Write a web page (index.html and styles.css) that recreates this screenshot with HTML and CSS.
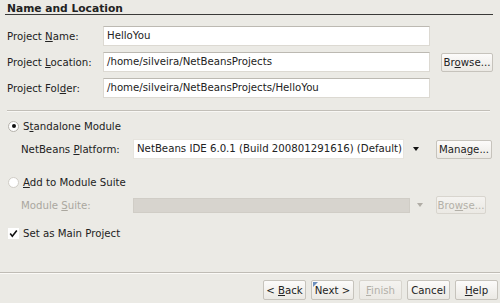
FILE: index.html
```html
<!DOCTYPE html>
<html>
<head>
<meta charset="utf-8">
<link rel="stylesheet" href="styles.css">
</head>
<body>
<div class="dlg">
  <div class="title">Name and Location</div>
  <div class="form">
    <div class="row">
      <span class="lbl">Project <u>N</u>ame:</span>
      <div class="field">HelloYou</div>
    </div>
    <div class="row">
      <span class="lbl">Project <u>L</u>ocation:</span>
      <div class="field">/home/silveira/NetBeansProjects</div>
      <button class="btn browse">Br<u>o</u>wse...</button>
    </div>
    <div class="row">
      <span class="lbl">Project Fol<u>d</u>er:</span>
      <div class="field">/home/silveira/NetBeansProjects/HelloYou</div>
    </div>
  </div>
  <div class="sep"></div>
  <div class="opt first">
    <span class="radio on"></span>
    <span>S<u>t</u>andalone Module</span>
  </div>
  <div class="sub platform">
    <span class="sublbl">NetBeans <u>P</u>latform:</span>
    <div class="combo">NetBeans IDE 6.0.1 (Build 200801291616) (Default)</div>
    <span class="arrow"></span>
    <button class="btn manage">Mana<u>g</u>e...</button>
  </div>
  <div class="opt second">
    <span class="radio"></span>
    <span><u>A</u>dd to Module Suite</span>
  </div>
  <div class="sub suite">
    <span class="sublbl dis">Module <u>S</u>uite:</span>
    <div class="combo disabled"></div>
    <span class="arrow disarrow"></span>
    <button class="btn dbtn browse2">Bro<u>w</u>se...</button>
  </div>
  <div class="opt third">
    <span class="check"><svg width="11" height="11" viewBox="0 0 11 11"><path d="M2.2 5.6 L4.3 8.2 L8.8 2.4" fill="none" stroke="#111" stroke-width="1.6"/></svg></span>
    <span>Set as Main Project</span>
  </div>
  <div class="bottomsep"></div>
  <div class="buttons">
    <button class="btn nav">&lt; <u>B</u>ack</button>
    <button class="btn nav next">Next &gt;</button>
    <button class="btn nav dbtn"><u>F</u>inish</button>
    <button class="btn nav">Cancel</button>
    <button class="btn nav"><u>H</u>elp</button>
  </div>
</div>
</body>
</html>
```
FILE: styles.css
```css
body {
  margin: 0;
}
.dlg {
  width: 500px;
  height: 303px;
  background: #ebeae5;
  font-family: "DejaVu Sans", sans-serif;
  font-size: 10.2px;
  color: #222;
  display: flex;
  flex-direction: column;
  box-sizing: border-box;
}
u {
  text-decoration: underline;
  text-underline-offset: 1px;
}
.title {
  margin: 0 7px 0 5px;
  padding: 3px 0 0 2px;
  height: 15px;
  box-sizing: border-box;
  border-bottom: 1px solid #3a3a38;
  font-weight: bold;
  font-size: 10.7px;
  line-height: 11px;
}
.form {
  padding: 11px 0 0 7px;
  display: flex;
  flex-direction: column;
  gap: 6px;
}
.row {
  display: flex;
  align-items: center;
  height: 20px;
}
.lbl {
  width: 96px;
}
.field {
  width: 327px;
  height: 20px;
  box-sizing: border-box;
  background: #fff;
  border: 1px solid #dcd9d2;
  border-top-color: #bcb9b2;
  padding-left: 3px;
  line-height: 18px;
  white-space: nowrap;
}
.btn {
  font-family: "DejaVu Sans", sans-serif;
  font-size: 10.2px;
  color: #222;
  height: 20px;
  box-sizing: border-box;
  border: 1px solid #c6c3bc;
  border-radius: 2px;
  background: linear-gradient(#fcfbfa, #ebe9e4);
  padding: 0;
  white-space: nowrap;
  position: relative;
}
.browse {
  margin-left: 11px;
  width: 52px;
  height: 19px;
}
.sep {
  margin: 12px 10px 0 7px;
  height: 1px;
  background: #c2bfb8;
  border-bottom: 1px solid #f8f7f4;
}
.opt {
  display: flex;
  align-items: center;
  height: 14px;
  padding-left: 8px;
  gap: 4px;
}
.first {
  margin-top: 7px;
}
.second {
  margin-top: 16px;
}
.third {
  margin-top: 12px;
}
.radio {
  width: 11px;
  height: 11px;
  box-sizing: border-box;
  border-radius: 50%;
  border: 1px solid #d0cdc6;
  background: #fff;
  display: flex;
  align-items: center;
  justify-content: center;
}
.radio.on {
  border-color: #b5b2ab;
}
.radio.on::after {
  content: "";
  width: 4px;
  height: 4px;
  border-radius: 50%;
  background: #111;
}
.check {
  width: 11px;
  height: 11px;
  box-sizing: border-box;
  background: #fff;
  display: flex;
}
.sub {
  display: flex;
  align-items: center;
  padding-left: 21px;
}
.platform {
  margin-top: 6px;
  height: 20px;
}
.suite {
  margin-top: 7px;
  height: 18px;
}
.sublbl {
  width: 112px;
}
.dis {
  color: #aaa79f;
}
.combo {
  width: 271px;
  height: 20px;
  box-sizing: border-box;
  background: #fff;
  border: 1px solid #e6e4de;
  padding-left: 3px;
  line-height: 18px;
  white-space: nowrap;
}
.combo.disabled {
  width: 277px;
  height: 15px;
  background: #d7d4ce;
  border-color: #d0cdc6;
}
.arrow {
  margin-left: 9px;
  width: 0;
  height: 0;
  border-left: 3.5px solid transparent;
  border-right: 3.5px solid transparent;
  border-top: 4px solid #111;
}
.disarrow {
  margin-left: 7px;
  border-top-color: #b0ada6;
}
.manage {
  margin-left: 17px;
  width: 56px;
  height: 19px;
}
.browse2 {
  margin-left: 13px;
  width: 50px;
  height: 18px;
}
.dbtn {
  color: #b3b0a8;
  border-color: #d8d5ce;
  background: linear-gradient(#f4f3f0, #ebe9e4);
}
.bottomsep {
  margin-top: auto;
  height: 1px;
  background: #bfbcb5;
  border-bottom: 1px solid #fbfaf7;
}
.buttons {
  display: flex;
  justify-content: flex-end;
  gap: 5px;
  padding: 6px 2px 3px 0;
}
.nav {
  width: 43px;
}
.next::before {
  content: "";
  position: absolute;
  left: 1px;
  top: 1px;
  width: 0;
  height: 0;
  border-top: 5px solid #6d8fbd;
  border-right: 5px solid transparent;
}
```
